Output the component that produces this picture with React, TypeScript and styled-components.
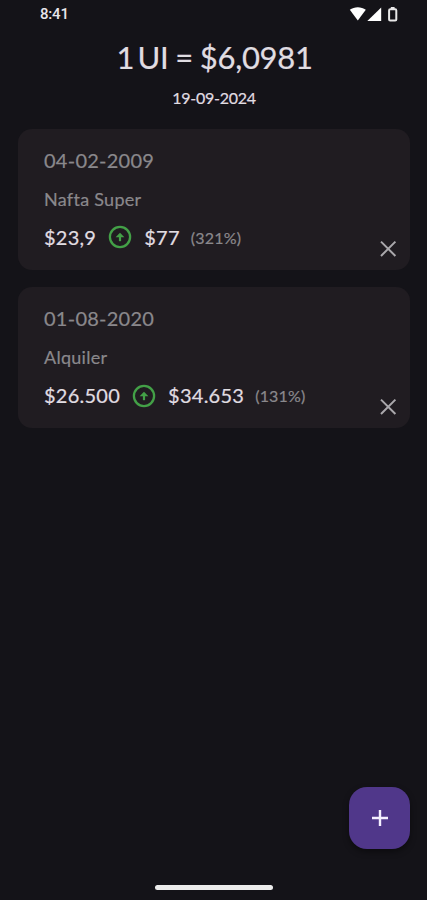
import React from "react";
import styled, { createGlobalStyle } from "styled-components";

const GlobalStyle = createGlobalStyle`
  *, *::before, *::after { box-sizing: border-box; }
  html, body { margin: 0; padding: 0; background: #141318; }
`;

const Screen = styled.div`
  display: flex;
  flex-direction: column;
  position: relative;
  width: 100%;
  height: 900px;
  overflow: hidden;
  background: #141318;
  color: #e0dde2;
  font-family: Lato, "Liberation Sans", sans-serif;
  -webkit-text-stroke: 0.2px currentColor;
`;

const StatusBar = styled.header`
  display: flex;
  align-items: center;
  justify-content: space-between;
  height: 28px;
  padding: 0 28px 0 40px;
`;

const Clock = styled.time`
  font: 500 15px/20px Roboto, sans-serif;
  letter-spacing: -0.2px;
  color: #e8e6ea;
  -webkit-text-stroke: 0;
`;

const StatusIcons = styled.svg`
  display: block;
  width: 50px;
  height: 18px;
`;

const Summary = styled.section`
  display: flex;
  flex-direction: column;
  align-items: center;
  height: 100.5px;
  padding-top: 9px;
`;

const Rate = styled.h1`
  display: flex;
  gap: 3.5px;
  margin: 0;
  padding-left: 2px;
  font-size: 31px;
  font-weight: 400;
  line-height: 40px;
  letter-spacing: -0.3px;
  word-spacing: -0.8px;
  white-space: nowrap;
`;

const RateDate = styled.p`
  margin: 10px 0 0;
  padding-left: 1px;
  font-size: 16px;
  line-height: 22px;
  letter-spacing: -0.25px;
`;

const List = styled.main`
  display: flex;
  flex-direction: column;
  gap: 17.5px;
  padding: 0 17px 0 18px;
`;

const Card = styled.article`
  display: flex;
  justify-content: space-between;
  height: 141px;
  padding: 18px 11px 10px 26px;
  border-radius: 14px;
  background: #201c21;
`;

const Details = styled.div`
  display: flex;
  flex-direction: column;
`;

const EntryDate = styled.div`
  font-size: 20px;
  line-height: 26px;
  letter-spacing: 0.25px;
  color: #8a888c;
`;

const EntryName = styled.div`
  margin-top: 14px;
  font-size: 18px;
  line-height: 24px;
  letter-spacing: 0.27px;
  color: #8a888c;
`;

const Amounts = styled.div`
  display: flex;
  align-items: center;
  margin-top: 13px;
  height: 26px;
`;

const Amount = styled.span`
  font-size: 20px;
  line-height: 26px;
  letter-spacing: 0.25px;
`;

const UpIcon = styled.svg`
  flex: none;
  width: 24px;
  height: 24px;
  margin: 1.6px 12px 0;
`;

const Percent = styled.span`
  margin: 2px 0 0 11px;
  font-size: 16px;
  line-height: 22px;
  letter-spacing: 0.2px;
  color: #8a888c;
`;

const RemoveButton = styled.button`
  display: grid;
  place-items: center;
  align-self: flex-end;
  width: 22px;
  height: 22px;
  margin: 0;
  padding: 0;
  border: 0;
  background: none;
  color: #aaa8ac;
`;

const AddButton = styled.button`
  display: grid;
  place-items: center;
  width: 61.5px;
  height: 62px;
  margin: auto 16.7px 36px auto;
  padding: 0;
  border: 0;
  border-radius: 18px;
  background: #50378a;
  color: #f4efff;
  box-shadow: 0 3px 6px rgba(0, 0, 0, 0.4);
`;

const HomeIndicator = styled.div`
  flex: none;
  align-self: center;
  width: 118px;
  height: 5px;
  margin-bottom: 10px;
  border-radius: 3px;
  background: #ececec;
`;

const entries = [
  { date: "04-02-2009", name: "Nafta Super", from: "$23,9", to: "$77", change: "(321%)" },
  { date: "01-08-2020", name: "Alquiler", from: "$26.500", to: "$34.653", change: "(131%)" },
];

export default function App() {
  return (
    <>
      <GlobalStyle />
      <Screen>
        <StatusBar>
          <Clock>8:41</Clock>
          <StatusIcons viewBox="0 0 50 18" fill="#fff" aria-hidden="true">
            <path d="M.8 4.8C5.3 1.4 12.3 1.4 16.8 4.8L8.8 15.6Z" />
            <path d="M32.2 2.6V16H18.3Z" />
            <path
              d="M41.2 4.3H46.2Q47.3 4.3 47.3 5.4V14.4Q47.3 15.5 46.2 15.5H41.2Q40.1 15.5 40.1 14.4V5.4Q40.1 4.3 41.2 4.3Z"
              fill="none"
              stroke="#e8e8e8"
              strokeWidth="2"
            />
            <path d="M41.8 2H45.6V4H41.8Z" fill="#e8e8e8" />
          </StatusIcons>
        </StatusBar>
        <Summary>
          <Rate>
            <span>1</span>
            <span>UI = $6,0981</span>
          </Rate>
          <RateDate>19-09-2024</RateDate>
        </Summary>
        <List>
          {entries.map((entry) => (
            <Card key={entry.date}>
              <Details>
                <EntryDate>{entry.date}</EntryDate>
                <EntryName>{entry.name}</EntryName>
                <Amounts>
                  <Amount>{entry.from}</Amount>
                  <UpIcon viewBox="0 0 24 24" fill="none" stroke="#43a047" aria-hidden="true">
                    <circle cx="12" cy="12" r="10.1" strokeWidth="2.3" />
                    <path d="M12 16.2V11" strokeWidth="2.2" />
                    <path d="M7.6 12.2L12 7.8L16.4 12.2Z" fill="#43a047" stroke="none" />
                  </UpIcon>
                  <Amount>{entry.to}</Amount>
                  <Percent>{entry.change}</Percent>
                </Amounts>
              </Details>
              <RemoveButton aria-label="Eliminar">
                <svg width="22" height="22" viewBox="0 0 22 22" fill="none" stroke="currentColor" strokeWidth="2">
                  <path d="M4 3.6L18.4 18M18.4 3.6L4 18" />
                </svg>
              </RemoveButton>
            </Card>
          ))}
        </List>
        <AddButton aria-label="Agregar">
          <svg width="18" height="18" viewBox="0 0 18 18" fill="none" stroke="currentColor" strokeWidth="2.4">
            <path d="M9 1V17M1 9H17" />
          </svg>
        </AddButton>
        <HomeIndicator />
      </Screen>
    </>
  );
}
